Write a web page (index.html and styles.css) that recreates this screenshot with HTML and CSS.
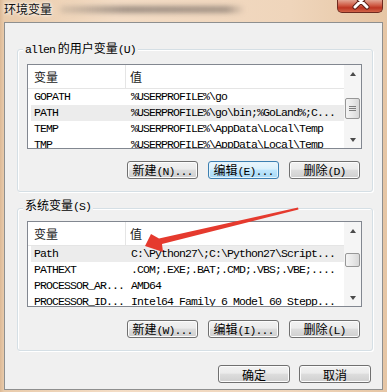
FILE: index.html
```html
<!DOCTYPE html>
<html lang="zh-CN">
<head>
    <meta charset="UTF-8">
    <title>环境变量</title>
    <link rel="stylesheet" href="styles.css">
</head>
<body>
    <div class="titlebar">
        <span class="title">环境变量</span>
        <span class="blur"></span>
        <span class="close">
            <svg width="46" height="12" viewBox="0 0 46 12">
                <path d="M18,-5 L30,7 M30,-5 L18,7" stroke="#5a1f16" stroke-width="5" stroke-linecap="round"/>
                <path d="M18,-5 L30,7 M30,-5 L18,7" stroke="#fff" stroke-width="3" stroke-linecap="round"/>
            </svg>
        </span>
    </div>

    <div class="panel">
        <div class="group">
            <div class="group-title"><span class="mono">allen</span> 的用户变量<span class="mono">(U)</span></div>
            <div class="list">
                <div class="list-body">
                    <div class="list-head">
                        <div class="col1">变量</div>
                        <div class="col2">值</div>
                    </div>
                    <div class="row"><div class="c1 mono">GOPATH</div><div class="c2 mono">%USERPROFILE%\go</div></div>
                    <div class="row sel"><div class="c1 mono">PATH</div><div class="c2 mono">%USERPROFILE%\go\bin;%GoLand%;C...</div></div>
                    <div class="row"><div class="c1 mono">TEMP</div><div class="c2 mono">%USERPROFILE%\AppData\Local\Temp</div></div>
                    <div class="row"><div class="c1 mono">TMP</div><div class="c2 mono">%USERPROFILE%\AppData\Local\Temp</div></div>
                </div>
                <div class="scrollbar">
                    <div class="sb-btn up"></div>
                    <div class="sb-track"><div class="thumb grip"></div></div>
                    <div class="sb-btn down"></div>
                </div>
            </div>
            <div class="buttons">
                <button class="btn">新建<span class="mono">(N)...</span></button>
                <button class="btn default">编辑<span class="mono">(E)...</span></button>
                <button class="btn">删除<span class="mono">(D)</span></button>
            </div>
        </div>

        <div class="group sys">
            <div class="group-title">系统变量<span class="mono">(S)</span></div>
            <div class="list">
                <div class="list-body">
                    <div class="list-head">
                        <div class="col1">变量</div>
                        <div class="col2">值</div>
                    </div>
                    <div class="row sel"><div class="c1 mono">Path</div><div class="c2 mono">C:\Python27\;C:\Python27\Script...</div></div>
                    <div class="row"><div class="c1 mono">PATHEXT</div><div class="c2 mono">.COM;.EXE;.BAT;.CMD;.VBS;.VBE;....</div></div>
                    <div class="row"><div class="c1 mono">PROCESSOR_AR...</div><div class="c2 mono">AMD64</div></div>
                    <div class="row"><div class="c1 mono">PROCESSOR_ID...</div><div class="c2 mono">Intel64 Family 6 Model 60 Stepp...</div></div>
                </div>
                <div class="scrollbar">
                    <div class="sb-btn up"></div>
                    <div class="sb-track"><div class="thumb small"></div></div>
                    <div class="sb-btn down"></div>
                </div>
            </div>
            <div class="buttons">
                <button class="btn">新建<span class="mono">(W)...</span></button>
                <button class="btn">编辑<span class="mono">(I)...</span></button>
                <button class="btn">删除<span class="mono">(L)</span></button>
            </div>
        </div>

        <div class="dialog-buttons">
            <button class="btn">确定</button>
            <button class="btn">取消</button>
        </div>
    </div>

    <!-- red annotation arrow drawn over the dialog -->
    <svg class="annotation" width="387" height="392" viewBox="0 0 387 392">
        <polygon points="145,246 151,234 159,238.5 298,207.5 298.5,209.5 162,244 163,252" fill="#e53a2e"/>
    </svg>
</body>
</html>
```

FILE: styles.css
```css
body {
    margin: 0;
    width: 387px;
    height: 392px;
    overflow: hidden;
    position: relative;
    font-family: "Noto Sans CJK SC", sans-serif;
    font-size: 12px;
    color: #000;
    background: linear-gradient(to right, #dcb996 0, #e9cbab 4px, #f3dcc5 30%, #efd5bb 75%, #e6c6a5 100%);
}

.mono {
    font-family: "Liberation Mono", monospace;
    font-size: 11.5px;
    letter-spacing: -0.9px;
    color: #000;
}

.titlebar {
    height: 22px;
    display: flex;
    align-items: flex-start;
}

.title {
    margin: 2px 0 0 4px;
    line-height: 14px;
    color: #111;
    text-shadow: 0 0 5px #fff, 0 0 3px #fff;
}

.blur {
    width: 185px;
    height: 7px;
    margin: 6px 0 0 8px;
    border-radius: 4px;
    background: linear-gradient(to right, rgba(150, 140, 130, 0.25), rgba(105, 95, 90, 0.6) 35%, rgba(105, 95, 90, 0.55) 90%, rgba(105, 95, 90, 0));
    filter: blur(2.5px);
}

.close {
    margin-left: auto;
    margin-right: 4px;
    width: 46px;
    height: 13px;
    box-sizing: border-box;
    border: 1px solid #6e2a1f;
    border-top: none;
    border-radius: 0 0 5px 5px;
    background: linear-gradient(#e3a593, #cf5a44 45%, #bd3522 65%, #d16449);
    overflow: hidden;
}

.close svg {
    display: block;
    margin-left: -1px;
}

.panel {
    margin: 0 4px;
    height: 368px;
    box-sizing: border-box;
    border: 1px solid #8e8f8f;
    background: #f0f0f0;
    overflow: hidden;
}

.group {
    margin: 26px 9px 0 12px;
    padding: 0 10px 12px 9px;
    border: 1px solid #d5dfe5;
    border-radius: 3px;
    box-shadow: inset 1px 1px 0 #fff, 1px 1px 0 #fff;
}

.group.sys {
    margin-top: 16px;
}

.group-title {
    width: fit-content;
    margin: -9px 0 7px -4px;
    padding: 0 2px;
    line-height: 14px;
    background: #f0f0f0;
}

.sys .group-title {
    margin-top: -11px;
}

.list {
    height: 85px;
    box-sizing: border-box;
    border: 1px solid #828790;
    background: #fff;
    display: flex;
    overflow: hidden;
}

.sys .list {
    height: 86px;
}

.list-body {
    flex: 1;
    min-width: 0;
    overflow: hidden;
}

.list-head {
    display: flex;
    height: 23px;
    line-height: 23px;
    border-bottom: 1px solid #e5e5e5;
    color: #1a1a1a;
}

.list-head .col1 {
    width: 91px;
    padding-left: 6px;
    border-right: 1px solid #e5e5e5;
}

.list-head .col2 {
    padding-left: 4px;
}

.row {
    display: flex;
    height: 16px;
    line-height: 16px;
    margin-left: 3px;
    white-space: nowrap;
}

.row.sel {
    background: #ececec;
}

.row .c1 {
    width: 92px;
    padding-left: 3px;
    flex-shrink: 0;
}

.row .c2 {
    padding-left: 5px;
}

.scrollbar {
    width: 17px;
    display: flex;
    flex-direction: column;
    background: #f5f5f5;
}

.sb-btn {
    height: 17px;
    display: flex;
    align-items: center;
    justify-content: center;
}

.sb-btn::before {
    content: "";
    border: solid transparent;
}

.sb-btn.up::before {
    border-width: 0 3.5px 4px;
    border-bottom-color: #4a4a4a;
}

.sb-btn.down::before {
    border-width: 4px 3.5px 0;
    border-top-color: #4a4a4a;
}

.sb-track {
    flex: 1;
}

.thumb {
    margin: 16px 1px 0;
    height: 21px;
    box-sizing: border-box;
    border: 1px solid #979797;
    border-radius: 2px;
    background: linear-gradient(to right, #f4f4f4, #e8e8e8 50%, #d8d8d8);
    display: flex;
    align-items: center;
    justify-content: center;
}

.thumb.small {
    margin-top: 14px;
    height: 14px;
}

.thumb.grip::after {
    content: "";
    width: 7px;
    height: 5px;
    background: repeating-linear-gradient(#7d7d7d 0 1px, transparent 1px 2px);
}

.buttons {
    display: flex;
    justify-content: flex-end;
    gap: 10px;
    margin-top: 12px;
    padding-right: 2px;
}

.sys .buttons {
    margin-top: 13px;
}

.btn {
    width: 71px;
    height: 18px;
    box-sizing: border-box;
    padding: 0;
    border: 1px solid #707070;
    border-radius: 3px;
    background: linear-gradient(#f2f2f2, #ebebeb 45%, #dddddd 50%, #cfcfcf);
    box-shadow: inset 0 0 0 1px #fcfcfc;
    font-family: "Noto Sans CJK SC", sans-serif;
    font-size: 12px;
    line-height: 15px;
    color: #000;
    text-align: center;
    white-space: nowrap;
}

.btn.default {
    border-color: #3c7fb1;
    background: linear-gradient(#eaf6fd, #d9f0fc 45%, #bee6fd 50%, #a7d9f5);
    box-shadow: inset 0 0 0 1px #e5f4fc;
}

.dialog-buttons {
    display: flex;
    justify-content: flex-end;
    gap: 9px;
    margin: 14px 11px 0 0;
}

.dialog-buttons .btn {
    width: 72px;
}

.annotation {
    position: absolute;
    top: 0;
    left: 0;
    pointer-events: none;
}
```
